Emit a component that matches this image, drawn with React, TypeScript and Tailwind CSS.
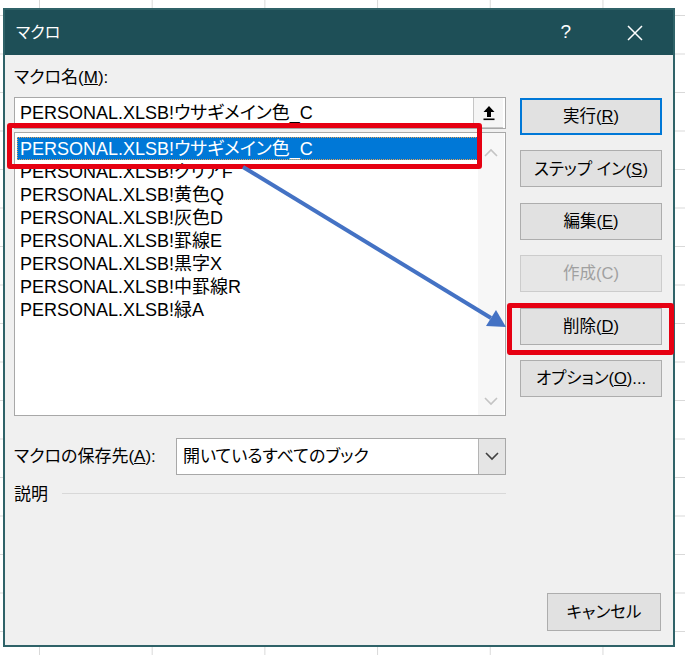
import React from 'react'

const ui = "font-['Liberation_Sans','Noto_Sans_CJK_JP',sans-serif] [font-feature-settings:'palt']"

const items = [
  'PERSONAL.XLSB!ウサギメイン色_C',
  'PERSONAL.XLSB!クリアF',
  'PERSONAL.XLSB!黄色Q',
  'PERSONAL.XLSB!灰色D',
  'PERSONAL.XLSB!罫線E',
  'PERSONAL.XLSB!黒字X',
  'PERSONAL.XLSB!中罫線R',
  'PERSONAL.XLSB!緑A',
]

function Btn({ children, primary, disabled }: { children: React.ReactNode; primary?: boolean; disabled?: boolean }) {
  return (
    <div
      className={
        'h-[37px] flex items-center justify-center bg-[#e1e1e1] text-[16.5px] ' +
        (primary ? 'border-2 border-[#0078d7] ' : 'border border-[#adadad] ') +
        (disabled ? 'text-[#a0a0a0] border-[#cccccc] bg-[#e6e6e6]' : 'text-black')
      }
    >
      {children}
    </div>
  )
}

function Chevron({ up, color }: { up?: boolean; color: string }) {
  return (
    <svg width="14" height="9" viewBox="0 0 14 9">
      <path d={up ? 'M1 8 L7 2 L13 8' : 'M1 1 L7 7 L13 1'} fill="none" stroke={color} strokeWidth="1.6" />
    </svg>
  )
}

export default function App() {
  return (
    <div
      className={
        'relative w-[685px] h-[655px] overflow-hidden bg-white pt-[8px] pl-[3px] ' +
        '[background-image:linear-gradient(to_right,#d9d9d9_1px,transparent_1px),linear-gradient(to_bottom,#d9d9d9_1px,transparent_1px)] ' +
        '[background-size:112.7px_38.5px] [background-position:39px_15px] ' +
        ui
      }
    >
      {/* dialog window */}
      <div className="w-[672px] h-[639px] border-2 border-[#2f6268] bg-[#f0f0f0] flex flex-col">
        <div className="h-[45px] shrink-0 bg-[#1e4f57] flex items-center pl-[11px] pr-[30px] text-white">
          <span className="text-[16px]">マクロ</span>
          <span className="ml-auto text-[19px] mr-[56px]">?</span>
          <svg width="16" height="16" viewBox="0 0 16 16">
            <path d="M1 1 L15 15 M15 1 L1 15" stroke="white" strokeWidth="1.5" />
          </svg>
        </div>

        <div className="flex-1 flex flex-col pl-[9px] pr-[11px] pt-[12px] pb-[14px] text-black">
          <div className="flex gap-[14px]">
            <div className="w-[492px] flex flex-col">
              <div className="h-[22px] leading-[22px] text-[17px] mb-[8px]">
                マクロ名(<span className="underline">M</span>):
              </div>
              <div className="h-[32px] bg-white border border-[#a8a8a8] flex items-center">
                <span className="pl-[5px] text-[18px] flex-1">PERSONAL.XLSB!ウサギメイン色_C</span>
                <div className="w-[30px] h-full bg-[#f5f5f5] border-l border-[#c6c6c6] border-b flex items-center justify-center mr-[2px]">
                  <svg width="14" height="16" viewBox="0 0 14 16">
                    <path d="M7 1 L1.5 7 H5 V12 H9 V7 H12.5 Z" fill="black" />
                    <rect x="1.5" y="13.5" width="11" height="1.6" fill="black" />
                  </svg>
                </div>
              </div>
              <div className="mt-[3px] h-[284px] bg-white border border-[#a8a8a8] flex">
                <div className="flex-1 pt-[4px] pl-[2px]">
                  {items.map((t, i) => (
                    <div
                      key={t}
                      className={
                        'h-[23px] leading-[24px] pl-[3px] text-[18px] whitespace-nowrap overflow-hidden ' +
                        (i === 0 ? 'bg-[#0078d7] text-white outline-1 outline-dotted outline-[#e2a15a] -outline-offset-1' : '')
                      }
                    >
                      {t}
                    </div>
                  ))}
                </div>
                <div className="w-[26px] mr-[1px] bg-[#f7f7f7] flex flex-col items-center justify-between pt-[15px] pb-[9px]">
                  <Chevron up color="#c4c4c4" />
                  <Chevron color="#c4c4c4" />
                </div>
              </div>
            </div>

            <div className="w-[142px] pt-[31px] flex flex-col gap-[15.4px]">
              <Btn primary>
                実行(<span className="underline">R</span>)
              </Btn>
              <Btn>
                ステップ イン(<span className="underline">S</span>)
              </Btn>
              <Btn>
                編集(<span className="underline">E</span>)
              </Btn>
              <Btn disabled>作成(C)</Btn>
              <Btn>
                削除(<span className="underline">D</span>)
              </Btn>
              <Btn>
                オプション(<span className="underline">O</span>)...
              </Btn>
            </div>
          </div>

          <div className="w-[492px] mt-[22px] flex items-center">
            <span className="flex-1 text-[17px]">
              マクロの保存先(<span className="underline">A</span>):
            </span>
            <div className="w-[330px] h-[37px] bg-white border border-[#a8a8a8] flex items-center">
              <span className="flex-1 pl-[6px] text-[17px]">開いているすべてのブック</span>
              <div className="w-[27px] h-full bg-[#e5e5e5] border-l border-[#b4b4b4] flex items-center justify-center">
                <Chevron color="#404040" />
              </div>
            </div>
          </div>

          <div className="w-[492px] mt-[9px] h-[22px] flex items-center gap-[14px]">
            <span className="text-[17px]">説明</span>
            <div className="flex-1 h-px bg-[#d8d8d8] -mt-[3px]" />
          </div>

          <div className="flex-1 flex items-end justify-end pr-px">
            <div className="w-[114px] h-[38px] bg-[#e1e1e1] border border-[#adadad] flex items-center justify-center text-[16.5px]">
              キャンセル
            </div>
          </div>
        </div>
      </div>

      {/* annotations drawn over the screenshot */}
      <div className="absolute left-[7px] top-[123px] w-[475px] h-[46px] border-[5px] border-[#e60012] rounded-[3px]" />
      <div className="absolute left-[507px] top-[303px] w-[167px] h-[52px] border-[5px] border-[#e60012] rounded-[3px]" />
      <svg className="absolute left-0 top-0" width="685" height="655" viewBox="0 0 685 655">
        <line x1="243" y1="167" x2="491" y2="318" stroke="#4472c4" strokeWidth="4" />
        <polygon points="506,327 486,326 496,310" fill="#4472c4" />
      </svg>
    </div>
  )
}
